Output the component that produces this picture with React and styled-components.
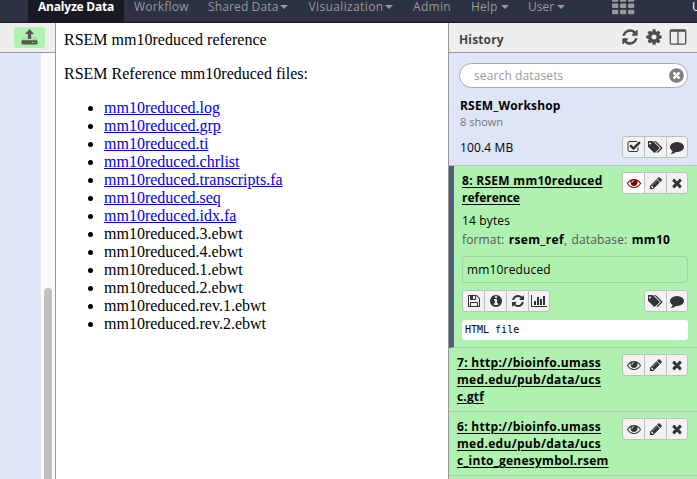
import React from 'react';
import styled, { createGlobalStyle } from 'styled-components';

const GlobalStyle = createGlobalStyle`
  * { box-sizing: border-box; }
  body {
    margin: 0;
    overflow: hidden;
    background: #fff;
    font-family: "Open Sans", "Noto Sans", sans-serif;
    font-size: 12px;
    color: #000;
  }
`;

const ICONS = {
  times: [1792, 'M1490 1322q0 40-28 68l-136 136q-28 28-68 28t-68-28l-294-294-294 294q-28 28-68 28t-68-28l-136-136q-28-28-28-68t28-68l294-294-294-294q-28-28-28-68t28-68l136-136q28-28 68-28t68 28l294 294 294-294q28-28 68-28t68 28l136 136q28 28 28 68t-28 68l-294 294 294 294q28 28 28 68z'],
  pencil: [1792, 'M491 1536l91-91-235-235-91 91v107h128v128h107zm523-928q0-22-22-22-10 0-17 7l-542 542q-7 7-7 17 0 22 22 22 10 0 17-7l542-542q7-7 7-17zm-54-192l416 416-832 832h-416v-416zm683 96q0 53-37 90l-166 166-416-416 166-165q36-38 90-38 53 0 91 38l235 234q37 39 37 91z'],
  eye: [1792, 'M1664 960q-152-236-381-353 61 104 61 225 0 185-131.5 316.5t-316.5 131.5-316.5-131.5-131.5-316.5q0-121 61-225-229 117-381 353 133 205 333.5 326.5t434.5 121.5 434.5-121.5 333.5-326.5zm-720-384q0-20-14-34t-34-14q-125 0-214.5 89.5t-89.5 214.5q0 20 14 34t34 14 34-14 14-34q0-86 61-147t147-61q20 0 34-14t14-34zm848 384q0 34-20 69-140 230-376.5 368.5t-499.5 138.5-499.5-139-376.5-368q-20-35-20-69t20-69q140-229 376.5-368t499.5-139 499.5 139 376.5 368q20 35 20 69z'],
  comment: [1792, 'M1792 896q0 174-120 321.500t-326 233-450 85.500q-70 0-145-8-198 175-460 242-49 14-114 22-17 2-30.500-9t-17.500-29v-1q-3-4-.5-12t2-10 4.500-9.500l6-9 7-8.500 8-9q7-8 31-34.500t34.500-38 31-39.500 32.500-51 27-59 26-76q-157-89-247.500-220t-90.500-281q0-130 71-248.500t191-204.500 286-136.500 348-50.500q244 0 450 85.500t326 233 120 321.500z'],
  refresh: [1792, 'M1639 1056q0 5-1 7-64 268-268 434.5t-478 166.5q-146 0-282.5-55t-243.5-157l-129 129q-19 19-45 19t-45-19-19-45v-448q0-26 19-45t45-19h448q26 0 45 19t19 45-19 45l-137 137q71 66 161 102t187 36q134 0 250-65t186-179q11-17 53-117 8-23 30-23h192q13 0 22.5 9.5t9.5 22.5zm25-800v448q0 26-19 45t-45 19h-448q-26 0-45-19t-19-45 19-45l138-138q-148-137-349-137-134 0-250 65t-186 179q-11 17-53 117-8 23-30 23h-199q-13 0-22.5-9.5t-9.5-22.5v-7q65-268 270-434.5t480-166.5q146 0 284 55.5t245 156.5l130-129q19-19 45-19t45 19 19 45z'],
  cog: [1792, 'M1152 896q0-106-75-181t-181-75-181 75-75 181 75 181 181 75 181-75 75-181zm512-109v222q0 12-8 23t-20 13l-185 28q-19 54-39 91 35 50 107 138 10 12 10 25t-9 23q-27 37-99 108t-94 71q-12 0-26-9l-138-108q-44 23-91 38-16 136-29 186-7 28-36 28h-222q-14 0-24.500-8.500t-11.500-21.500l-28-184q-49-16-90-37l-141 107q-10 9-25 9-14 0-25-11-126-114-165-168-7-10-7-23 0-12 8-23 15-21 51-66.500t54-70.500q-27-50-41-99l-183-27q-13-2-21-12.500t-8-23.500v-222q0-12 8-23t19-13l186-28q14-46 39-92-40-57-107-138-10-12-10-24 0-10 9-23 26-36 98.500-107.500t94.500-71.500q13 0 26 10l138 107q44-23 91-38 16-136 29-186 7-28 36-28h222q14 0 24.500 8.500t11.500 21.500l28 184q49 16 90 37l142-107q9-9 24-9 13 0 25 10 129 119 165 170 7 8 7 22 0 12-8 23-15 21-51 66.500t-54 70.500q26 50 41 98l183 28q13 2 21 12.500t8 23.500z'],
  columns: [1792, 'M224 1536h608v-1152h-640v1120q0 13 9.500 22.500t22.500 9.500zm1376-32v-1120h-640v1152h608q13 0 22.500-9.500t9.500-22.500zm128-1216v1216q0 66-47 113t-113 47h-1344q-66 0-113-47t-47-113v-1216q0-66 47-113t113-47h1344q66 0 113 47t47 113z'],
  tags: [1835, 'M384 448q0-53-37.5-90.5t-90.5-37.5-90.5 37.5-37.5 90.5 37.5 90.5 90.5 37.5 90.5-37.5 37.5-90.5zm1067 576q0 53-37 90l-491 492q-39 37-91 37-53 0-90-37l-715-716q-38-37-64.500-101t-26.500-117v-416q0-52 38-90t90-38h416q53 0 117 26.500t102 64.500l715 714q37 39 37 91zm384 0q0 53-37 90l-491 492q-39 37-91 37-36 0-59-14t-53-45l470-470q37-37 37-90 0-52-37-91l-715-714q-38-38-102-64.500t-117-26.500h224q53 0 117 26.500t102 64.500l715 714q37 39 37 91z'],
  check: [1792, 'M1472 930v318q0 119-84.5 203.5t-203.5 84.5h-832q-119 0-203.500-84.500t-84.500-203.500v-832q0-119 84.500-203.500t203.500-84.500h832q63 0 117 25 15 7 18 23 3 17-9 29l-49 49q-10 10-23 10-3 0-9-2-23-6-45-6h-832q-66 0-113 47t-47 113v832q0 66 47 113t113 47h832q66 0 113-47t47-113v-254q0-13 9-22l64-64q10-10 23-10 6 0 12 3 20 8 20 29zm231-489l-814 814q-24 24-57 24t-57-24l-430-430q-24-24-24-57t24-57l110-110q24-24 57-24t57 24l263 263 647-647q24-24 57-24t57 24l110 110q24 24 24 57t-24 57z'],
  info: [1792, 'M1152 1376v-160q0-14-9-23t-23-9h-96v-512q0-14-9-23t-23-9h-320q-14 0-23 9t-9 23v160q0 14 9 23t23 9h96v320h-96q-14 0-23 9t-9 23v160q0 14 9 23t23 9h448q14 0 23-9t9-23zm-128-896v-160q0-14-9-23t-23-9h-192q-14 0-23 9t-9 23v160q0 14 9 23t23 9h192q14 0 23-9t9-23zm640 416q0 209-103 385.500t-279.500 279.500-385.500 103-385.500-103-279.500-279.500-103-385.500 103-385.500 279.500-279.500 385.500-103 385.500 103 279.500 279.500 103 385.500z'],
  save: [1792, 'M512 1536h768v-384h-768v384zm896 0h128v-896q0-14-10-38.500t-20-34.500l-281-281q-10-10-34-20t-39-10v416q0 40-28 68t-68 28h-576q-40 0-68-28t-28-68v-416h-128v1280h128v-416q0-40 28-68t68-28h832q40 0 68 28t28 68v416zm-384-928v-320q0-13-9.500-22.500t-22.500-9.500h-192q-13 0-22.500 9.500t-9.500 22.500v320q0 13 9.500 22.500t22.500 9.500h192q13 0 22.500-9.500t9.500-22.500zm640 32v928q0 40-28 68t-68 28h-1344q-40 0-68-28t-28-68v-1344q0-40 28-68t68-28h928q40 0 88 20t76 48l280 280q28 28 48 76t20 88z'],
  chart: [2048, 'M640 896v512h-256v-512h256zm384-512v1024h-256v-1024h256zm1024 1152v128h-2048v-1536h128v1408h1920zm-640-896v768h-256v-768h256zm384-384v1152h-256v-1152h256z'],
  clear: [1792, 'M1277 1122q0-26-19-45l-181-181 181-181q19-19 19-45 0-27-19-46l-90-90q-19-19-46-19-26 0-45 19l-181 181-181-181q-19-19-45-19-27 0-46 19l-90 90q-19 19-19 46 0 26 19 45l181 181-181 181q-19 19-19 45 0 27 19 46l90 90q19 19 46 19 26 0 45-19l181-181 181 181q19 19 45 19 27 0 46-19l90-90q19-19 19-46zm387-226q0 209-103 385.500t-279.500 279.500-385.500 103-385.500-103-279.500-279.500-103-385.500 103-385.500 279.500-279.500 385.500-103 385.500 103 279.500 279.500 103 385.500z'],
};

const Svg = styled.svg`
  display: block;
  flex: none;
  fill: currentColor;
`;

function Icon({ name, size = 14 }) {
  const [width, d] = ICONS[name];
  return (
    <Svg width={(size * width) / 1792} height={size} viewBox={`0 0 ${width} 1792`}>
      <path d={d} />
    </Svg>
  );
}

const Page = styled.div`
  display: flex;
  flex-direction: column;
  height: 479px;
  width: 697px;
  overflow: hidden;
`;

const Masthead = styled.nav`
  display: flex;
  height: 23px;
  flex: none;
  padding-left: 28px;
  background: #2c3143;
  border-bottom: 1px solid #181b26;
  overflow: hidden;
`;

const NavItem = styled.a`
  display: flex;
  flex: none;
  width: ${(p) => p.$width}px;
  padding-left: ${(p) => p.$pad || 0}px;
  height: 22px;
  line-height: 13px;
  letter-spacing: ${(p) => p.$spacing || 0}px;
  white-space: nowrap;
  color: ${(p) => (p.$active ? '#fff' : '#999')};
  background: ${(p) => (p.$active ? '#181a23' : 'transparent')};
  font-weight: ${(p) => (p.$active ? 700 : 400)};
`;

const UserQuota = styled.div`
  flex: 1;
  padding-left: 1px;
  line-height: 13px;
  color: #fff;
  white-space: nowrap;
`;

const Caret = styled.span`
  width: 0;
  height: 0;
  margin: 5px 0 0 ${(p) => p.$gap || 3}px;
  border: 4px solid transparent;
  border-top-color: #999;
  border-bottom: 0;
`;

const Columns = styled.div`
  display: flex;
  flex: 1;
  min-height: 0;
`;

const ToolPanel = styled.aside`
  display: flex;
  flex-direction: column;
  width: 56px;
  flex: none;
  border-right: 1px solid #999;
`;

const PanelHeader = styled.header`
  display: flex;
  align-items: center;
  height: 30px;
  flex: none;
  background: #eee;
  border-bottom: 1px solid #999;
`;

const UploadButton = styled.button`
  display: block;
  width: 31px;
  height: 21px;
  margin: 0 0 1px 14px;
  padding: 0 0 1px 7px;
  border: 0;
  border-radius: 3px;
  background: #aff1af;
  color: #555;
`;

const ToolBody = styled.div`
  display: flex;
  flex: 1;
  background: #dfe5f9;
`;

const ScrollTrack = styled.div`
  width: 15px;
  margin-left: auto;
  padding: 235px 3px 0;
  background: #fafafa;
  border-left: 1px solid #e8e8e8;
`;

const ScrollThumb = styled.div`
  height: 100%;
  border-radius: 4px 4px 0 0;
  background: #c1c1c1;
`;

const Center = styled.main`
  width: 392px;
  flex: none;
  padding: 8px;
  font: 16px/18px "Liberation Serif", "Times New Roman", serif;
`;

const Paragraph = styled.p`
  margin: 0 0 16px;
`;

const FileList = styled.ul`
  margin: 0;
  padding-left: 40px;
`;

const FileLink = styled.a`
  color: #0000ee;
  text-decoration: underline;
`;

const HistoryPanel = styled.aside`
  display: flex;
  flex-direction: column;
  flex: 1;
  min-width: 0;
  border-left: 1px solid #999;
  background: #dfe5f9;
`;

const HistoryTitle = styled.h1`
  margin: 3px auto 0 10px;
  font-size: 12px;
  font-weight: 700;
  letter-spacing: 0.15px;
  color: #444;
`;

const HeaderIcons = styled.div`
  display: flex;
  gap: 6px;
  padding: 0 10px 1px 0;
  color: #4d4d4d;
`;

const HistorySummary = styled.section`
  height: 113px;
  flex: none;
  padding: 10px 9px 0 10px;
  border-bottom: 1px solid #bfbfbf;
`;

const SearchBox = styled.div`
  display: flex;
  align-items: center;
  justify-content: space-between;
  height: 25px;
  padding: 0 2px 0 14px;
  border: 1px solid #aaa;
  border-radius: 13px;
  background: #fff;
  color: #999;
  letter-spacing: 0.12px;
`;

const ClearIcon = styled.span`
  color: #808080;
`;

const HistoryName = styled.div`
  margin: 9px 0 0 1px;
  line-height: 17px;
  font-weight: 700;
  letter-spacing: 0.18px;
`;

const ShownCount = styled.div`
  margin-left: 1px;
  line-height: 16px;
  font-size: 11px;
  color: #777;
`;

const SizeRow = styled.div`
  display: flex;
  justify-content: space-between;
  align-items: center;
  margin-top: 6px;
  padding-left: 1px;
  letter-spacing: 0.15px;
`;

const ButtonGroup = styled.div`
  display: flex;
  flex: none;
  height: 22px;
  border: 1px solid #bfbfbf;
  border-radius: 3px;
  background: #f2f2f2;
  overflow: hidden;
`;

const IconButton = styled.button`
  display: flex;
  align-items: center;
  justify-content: center;
  width: ${(p) => (p.$last ? 20 : 22)}px;
  padding: 0;
  border: 0;
  border-right: ${(p) => (p.$last ? 0 : 1)}px solid #bfbfbf;
  background: ${(p) => (p.$viewed ? '#fff' : 'transparent')};
  color: ${(p) => (p.$viewed ? '#800000' : '#333')};
`;

const Dataset = styled.article`
  height: ${(p) => (p.$current ? 182 : 64)}px;
  flex: none;
  padding: 6px 9px 0 8px;
  background: #aff1af;
  border-left: ${(p) => (p.$current ? 5 : 0)}px solid #505c7b;
  border-bottom: 1px solid #bfbfbf;
`;

const DatasetTop = styled.div`
  display: flex;
  justify-content: space-between;
`;

const DatasetTitle = styled.div`
  width: 152px;
  height: ${(p) => p.$lines * 17}px;
  line-height: 17px;
  font-weight: 700;
  white-space: nowrap;
  text-decoration: underline;
  text-decoration-thickness: 1px;
  text-underline-offset: 2px;
`;

const TitleLine = styled.div`
  letter-spacing: ${(p) => p.$spacing}px;
`;

const DatasetMeta = styled.div`
  margin-top: ${(p) => p.$top || 0}px;
  line-height: 19px;
  color: ${(p) => (p.$muted ? '#555' : '#000')};
  letter-spacing: 0.15px;
  word-spacing: ${(p) => (p.$muted ? 1 : 0)}px;
  white-space: nowrap;
`;

const MetaValue = styled.b`
  color: #000;
  letter-spacing: 0.35px;
`;

const InfoBox = styled.div`
  height: 27px;
  margin-top: 7px;
  padding-left: 4px;
  line-height: 25px;
  border: 1px solid #a3d3a3;
  border-radius: 3px;
  letter-spacing: 0.16px;
`;

const ActionRow = styled.div`
  display: flex;
  justify-content: space-between;
  margin-top: 7px;
`;

const Peek = styled.pre`
  height: 20px;
  margin: 8px 0 0;
  padding-left: 3px;
  border-radius: 3px;
  background: #fff;
  font: 10px/20px "DejaVu Sans Mono", "Liberation Mono", monospace;
`;

function Buttons({ names, viewed }) {
  return (
    <ButtonGroup>
      {names.map((name, i) => (
        <IconButton key={name} $last={i === names.length - 1} $viewed={viewed && i === 0}>
          <Icon name={name} />
        </IconButton>
      ))}
    </ButtonGroup>
  );
}

const LINKED = ['log', 'grp', 'ti', 'chrlist', 'transcripts.fa', 'seq', 'idx.fa'];
const PLAIN = ['3.ebwt', '4.ebwt', '1.ebwt', '2.ebwt', 'rev.1.ebwt', 'rev.2.ebwt'];
const EDIT = ['eye', 'pencil', 'times'];

export default function App() {
  return (
    <Page>
      <GlobalStyle />
      <Masthead>
        <NavItem $active $width={96} $pad={10} $spacing={-0.2}>Analyze Data</NavItem>
        <NavItem $width={84} $pad={10} $spacing={0.2}>Workflow</NavItem>
        <NavItem $width={100.5} $spacing={0.13}>Shared Data<Caret $gap={2} /></NavItem>
        <NavItem $width={104.5} $spacing={0.37}>Visualization<Caret $gap={2} /></NavItem>
        <NavItem $width={58} $spacing={0.31}>Admin</NavItem>
        <NavItem $width={57} $spacing={0.14}>Help<Caret /></NavItem>
        <NavItem $width={84}>User<Caret /></NavItem>
        <NavItem $width={79}>
          <Svg width="23" height="15" viewBox="0 0 23 15">
            {[-2.7, 3.5, 9.7].map((y) => [0, 8, 16].map((x) => (
              <rect key={`${x}-${y}`} x={x} y={y} width="6.3" height="4.5" rx="1" />
            )))}
          </Svg>
        </NavItem>
        <UserQuota>U</UserQuota>
      </Masthead>
      <Columns>
        <ToolPanel>
          <PanelHeader>
            <UploadButton>
              <Svg width="17" height="16" viewBox="0 0 17 16">
                <path d="M8.500 0L13 5H10.200V10H6.800V5H4z" />
                <path d="M2 8.500H5.500V11H11.500V8.500H15L16.500 12H.5z" opacity="0.15" />
                <path d="M1.500 11.300H15.500Q16.500 11.300 16.500 12.300V14.600Q16.500 15.600 15.500 15.600H1.500Q.5 15.600 .5 14.600V12.300Q.5 11.300 1.500 11.300zM11 13V14H12V13zM13.500 13V14H14.500V13z" fillRule="evenodd" />
              </Svg>
            </UploadButton>
          </PanelHeader>
          <ToolBody>
            <ScrollTrack><ScrollThumb /></ScrollTrack>
          </ToolBody>
        </ToolPanel>
        <Center>
          <Paragraph>RSEM mm10reduced reference</Paragraph>
          <Paragraph>RSEM Reference mm10reduced files:</Paragraph>
          <FileList>
            {LINKED.map((ext) => <li key={ext}><FileLink href="#">mm10reduced.{ext}</FileLink></li>)}
            {PLAIN.map((ext) => <li key={ext}>mm10reduced.{ext}</li>)}
          </FileList>
        </Center>
        <HistoryPanel>
          <PanelHeader>
            <HistoryTitle>History</HistoryTitle>
            <HeaderIcons>
              <Icon name="refresh" size={18} />
              <Icon name="cog" size={18} />
              <Icon name="columns" size={18} />
            </HeaderIcons>
          </PanelHeader>
          <HistorySummary>
            <SearchBox>
              search datasets
              <ClearIcon><Icon name="clear" size={17} /></ClearIcon>
            </SearchBox>
            <HistoryName>RSEM_Workshop</HistoryName>
            <ShownCount>8 shown</ShownCount>
            <SizeRow>
              100.4 MB
              <Buttons names={['check', 'tags', 'comment']} />
            </SizeRow>
          </HistorySummary>
          <Dataset $current>
            <DatasetTop>
              <DatasetTitle $lines={2}>
                <TitleLine $spacing={0.28}>8: RSEM mm10reduced</TitleLine>
                <TitleLine $spacing={0}>reference</TitleLine>
              </DatasetTitle>
              <Buttons names={EDIT} viewed />
            </DatasetTop>
            <DatasetMeta $top={5}>14 bytes</DatasetMeta>
            <DatasetMeta $muted>
              format: <MetaValue>rsem_ref</MetaValue>, database: <MetaValue>mm10</MetaValue>
            </DatasetMeta>
            <InfoBox>mm10reduced</InfoBox>
            <ActionRow>
              <Buttons names={['save', 'info', 'refresh', 'chart']} />
              <Buttons names={['tags', 'comment']} />
            </ActionRow>
            <Peek>HTML file</Peek>
          </Dataset>
          <Dataset>
            <DatasetTop>
              <DatasetTitle $lines={3}>
                <TitleLine $spacing={0.3}>7: http://bioinfo.umass</TitleLine>
                <TitleLine $spacing={0.31}>med.edu/pub/data/ucs</TitleLine>
                <TitleLine $spacing={0.15}>c.gtf</TitleLine>
              </DatasetTitle>
              <Buttons names={EDIT} />
            </DatasetTop>
          </Dataset>
          <Dataset>
            <DatasetTop>
              <DatasetTitle $lines={3}>
                <TitleLine $spacing={0.3}>6: http://bioinfo.umass</TitleLine>
                <TitleLine $spacing={0.31}>med.edu/pub/data/ucs</TitleLine>
                <TitleLine $spacing={0.25}>c_into_genesymbol.rsem</TitleLine>
              </DatasetTitle>
              <Buttons names={EDIT} />
            </DatasetTop>
          </Dataset>
          <Dataset />
        </HistoryPanel>
      </Columns>
    </Page>
  );
}
